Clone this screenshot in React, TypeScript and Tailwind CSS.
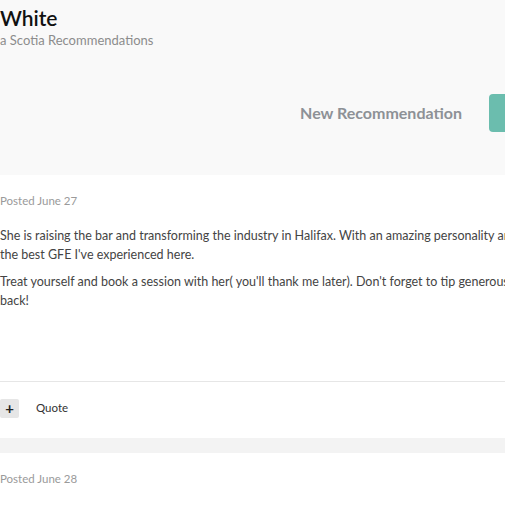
import React from 'react';

const font = { fontFamily: 'Lato, "Open Sans", sans-serif' };

interface Post {
  date: string;
  paragraphs: string[][];
}

const posts: Post[] = [
  {
    date: 'Posted June 27',
    paragraphs: [
      [
        'She is raising the bar and transforming the industry in Halifax. With an amazing personality and a body to match, she provides',
        "the best GFE I've experienced here.",
      ],
      [
        "Treat yourself and book a session with her( you'll thank me later). Don't forget to tip generously and she'll have you coming",
        'back!',
      ],
    ],
  },
  {
    date: 'Posted June 28',
    paragraphs: [['Another great experience, highly recommended to anyone visiting the city this summer.']],
  },
];

const PostCard: React.FC<{ post: Post; last?: boolean }> = ({ post, last }) => (
  <div className="bg-white">
    <div className="pt-[19px] text-[11.5px] leading-[14px] text-[#9a9a9a]">{post.date}</div>
    <div className="mt-[18px] h-[155px] text-[12.5px] leading-[19px] text-[#444]">
      {post.paragraphs.map((lines, i) => (
        <p key={i} className="mb-[8px] whitespace-nowrap">
          {lines.map((l, j) => (
            <React.Fragment key={j}>
              {l}
              {j < lines.length - 1 && <br />}
            </React.Fragment>
          ))}
        </p>
      ))}
    </div>
    {!last && (
      <div className="border-t border-[#e6e6e6] h-[57px] flex items-center gap-[17px] pb-[4px]">
        <button className="w-[19px] h-[19px] bg-[#e6e6e6] rounded-[2px] flex items-center justify-center text-[15px] font-bold text-[#222] leading-none">
          +
        </button>
        <span className="text-[11.5px] text-[#333]">Quote</span>
      </div>
    )}
  </div>
);

export default function App() {
  return (
    <div className="w-[505px] h-[505px] overflow-hidden bg-white" style={font}>
      <div className="bg-[#f9f9f9] h-[175px] pt-[4px]">
        <h1 className="text-[21px] font-semibold text-[#111] leading-[28px]">White</h1>
        <div className="text-[13px] text-[#8c8c8c] leading-[16px]">a Scotia Recommendations</div>
        <div className="flex justify-end items-center mt-[46px] gap-[27px] mr-[-40px]">
          <span className="text-[16px] font-bold text-[#8d9196]">New Recommendation</span>
          <div className="w-[56px] h-[38px] rounded-[4px] bg-[#6bbdae]" />
        </div>
      </div>
      <PostCard post={posts[0]} />
      <div className="h-[15px] bg-[#f3f3f3]" />
      <PostCard post={posts[1]} last />
    </div>
  );
}
